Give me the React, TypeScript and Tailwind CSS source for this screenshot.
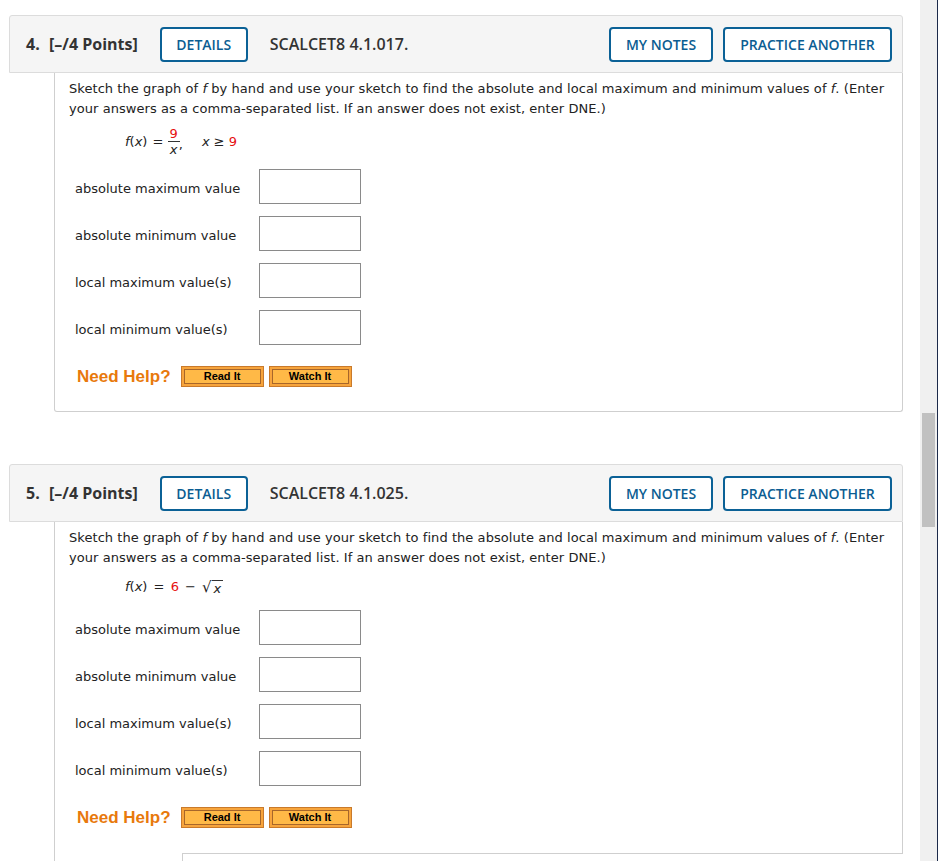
import React from 'react';

const sans = { fontFamily: '"Open Sans", "Liberation Sans", sans-serif' };
const verdana = { fontFamily: '"DejaVu Sans", Verdana, sans-serif' };
const arial = { fontFamily: '"Liberation Sans", Arial, sans-serif' };

const labels = [
    'absolute maximum value',
    'absolute minimum value',
    'local maximum value(s)',
    'local minimum value(s)',
];

const HeaderButton: React.FC<{ label: string; width: string }> = ({ label, width }) => (
    <button
        className={`${width} h-[35px] rounded-[4px] border-2 border-[#0b6196] bg-white text-[14px] font-semibold text-[#0b5d92]`}
        style={sans}
    >
        {label}
    </button>
);

const HelpButton: React.FC<{ label: string }> = ({ label }) => (
    <div className="w-[83px] h-[21px] border border-[#c97a2b] bg-[#f7a43c] p-[2px]">
        <div
            className="h-full border border-[#a7662a] bg-[#ffb947] flex items-center justify-center text-[11px] font-bold text-black leading-none"
            style={arial}
        >
            {label}
        </div>
    </div>
);

const QuestionHeader: React.FC<{ num: number; code: string }> = ({ num, code }) => (
    <div
        className="h-[58px] flex items-center border border-[#dcdcdc] bg-[#f5f5f5] rounded-t-[3px] pl-4 pr-[10px] text-[#333]"
        style={sans}
    >
        <span className="text-[16px] font-bold w-[23px]">{num}.</span>
        <span className="text-[16px] font-bold">[–/4 Points]</span>
        <div className="ml-[22px]">
            <HeaderButton label="DETAILS" width="w-[88px]" />
        </div>
        <span className="ml-[22px] text-[16px] font-semibold">{code}</span>
        <div className="ml-auto flex gap-[10px]">
            <HeaderButton label="MY NOTES" width="w-[104px]" />
            <HeaderButton label="PRACTICE ANOTHER" width="w-[169px]" />
        </div>
    </div>
);

const Answers: React.FC = () => (
    <>
        <div className="flex flex-col gap-3 pl-[6px]">
            {labels.map(l => (
                <div key={l} className="flex items-center">
                    <span className="w-[184px] pt-[4px]">{l}</span>
                    <div className="w-[102px] h-[35px] border border-[#8a8a8a] bg-white" />
                </div>
            ))}
        </div>
        <div className="flex items-center mt-[21px] pl-[8px]">
            <span className="text-[17px] font-bold text-[#e8790c] mr-[10px]" style={arial}>
                Need Help?
            </span>
            <HelpButton label="Read It" />
            <div className="w-[5px]" />
            <HelpButton label="Watch It" />
        </div>
    </>
);

const Prompt: React.FC = () => (
    <p className="whitespace-nowrap tracking-[0.06px]">
        Sketch the graph of <i>f</i> by hand and use your sketch to find the absolute and local maximum and minimum values of <i>f</i>. (Enter
        <br />
        your answers as a comma-separated list. If an answer does not exist, enter DNE.)
    </p>
);

export default function App() {
    return (
        <div className="flex h-[861px] w-[938px] overflow-hidden bg-white">
            <div className="w-[920px] pl-[9px] pr-[17px] pt-[15px]">
                {/* Question 4 */}
                <QuestionHeader num={4} code="SCALCET8 4.1.017." />
                <div
                    className="ml-[45px] border-x border-b border-[#cfcfcf] rounded-b-[3px] pt-[6px] pl-[14px] pb-[24px] text-[13px] leading-[20px] text-[#222]"
                    style={verdana}
                >
                    <Prompt />
                    <div className="ml-[56px] mt-[4px] h-[37px] flex items-center">
                        <span><i>f</i>(<i>x</i>) <span className="mx-[1px]">=</span></span>
                        <span className="inline-flex flex-col items-center mx-[3px] leading-[15px]">
                            <span className="text-[#e61010] px-[2px]">9</span>
                            <span className="border-t border-[#333] w-[12px]" />
                            <i>x</i>
                        </span>
                        <span className="-ml-[4px] mt-[6px]">,</span>
                        <span className="ml-[19px]"><i>x</i> ≥ <span className="text-[#e61010]">9</span></span>
                    </div>
                    <div className="mt-[9px]">
                        <Answers />
                    </div>
                </div>

                <div className="h-[52px]" />

                {/* Question 5 */}
                <QuestionHeader num={5} code="SCALCET8 4.1.025." />
                <div
                    className="ml-[45px] border-l border-[#cfcfcf] text-[13px] leading-[20px] text-[#222]"
                    style={verdana}
                >
                    <div className="border-r border-[#cfcfcf] pt-[6px] pl-[14px] pb-[25px]">
                        <Prompt />
                        <div className="ml-[56px] mt-[6px] h-[26px] flex items-center">
                            <span>
                                <i>f</i>(<i>x</i>) <span className="mx-[2px]">=</span> <span className="text-[#e61010]">6</span> <span className="mx-[2px]">−</span>
                            </span>
                            <span className="ml-[4px] text-[15px]">√</span>
                            <span className="border-t border-[#333] leading-[16px] px-[2px] mt-[2px]"><i>x</i></span>
                        </div>
                        <div className="mt-[10px]">
                            <Answers />
                        </div>
                    </div>
                    <div className="ml-[127px] border-t border-l border-[#cfcfcf] h-[40px]" />
                </div>
            </div>

            {/* scrollbar */}
            <div className="w-[17px] bg-[#f0f0f0] pt-[413px] pl-[2px] pr-[2px]">
                <div className="h-[114px] bg-[#c1c1c1]" />
            </div>
            <div className="w-[1px] bg-[#1c2a4a]" />
        </div>
    );
}
